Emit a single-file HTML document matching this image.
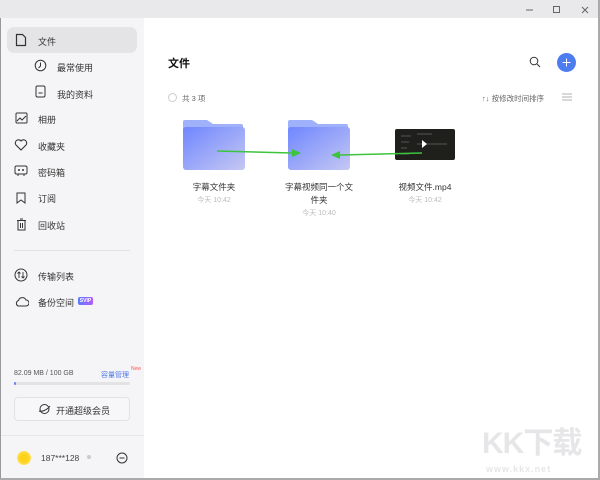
<!DOCTYPE html>
<html><head><meta charset="utf-8">
<style>
*{margin:0;padding:0;box-sizing:border-box}
html,body{width:600px;height:480px;overflow:hidden}
body{background:#fff;font-family:"Liberation Sans","Noto Sans CJK SC",sans-serif;position:relative;color:#222}
.abs{position:absolute;white-space:nowrap}
.tb{left:0;top:0;width:600px;height:18px;background:#e9e9eb}
.side{left:0;top:18px;width:144px;height:462px;background:#f5f5f7;border-left:1px solid #999}
.main{left:144px;top:18px;width:454px;height:462px;background:#fff}
.rb{left:598px;top:0;width:2px;height:480px;background:#aaa}
.bb{left:0;top:478px;width:600px;height:2px;background:#aaa}
.nav{font-size:9px;color:#333;position:absolute;left:38px;white-space:nowrap}
.sub{left:57px}
.ic{position:absolute}
.nm{position:absolute;font-size:8.5px;color:#333;text-align:center;width:90px}
.dt{position:absolute;font-size:7px;color:#bbb;text-align:center;width:90px}
</style></head><body>
<div class="abs tb"></div>
<svg class="abs" style="left:520px;top:4px" width="75" height="12"><line x1="6" y1="6" x2="13" y2="6" stroke="#666"/><rect x="33.5" y="2.5" width="6" height="6" fill="none" stroke="#666"/><path d="M62 3l6 6M68 3l-6 6" stroke="#666"/></svg>
<div class="abs side"></div>
<div class="abs main"></div>
<div class="abs" style="left:7px;top:27px;width:130px;height:26px;background:#e4e4e7;border-radius:7px"></div>
<svg class="ic" style="left:15px;top:33px" width="12" height="14"><path d="M1.5 1.5h6l3 3v8h-9z" fill="none" stroke="#333" stroke-width="1.2"/></svg>
<div class="nav" style="top:35px">文件</div>
<svg class="ic" style="left:34px;top:59px" width="13" height="13"><circle cx="6.5" cy="6.5" r="5.3" fill="none" stroke="#333"/><path d="M6.5 3.5v3.5l-2 2" fill="none" stroke="#333"/></svg>
<div class="nav sub" style="top:61px">最常使用</div>
<svg class="ic" style="left:35px;top:85px" width="11" height="13"><rect x="1" y="1" width="9" height="11" rx="1.5" fill="none" stroke="#333"/><path d="M3.5 8h4" stroke="#333"/></svg>
<div class="nav sub" style="top:88px">我的资料</div>
<svg class="ic" style="left:15px;top:112px" width="13" height="12"><rect x="1" y="1" width="11" height="10" rx="1" fill="none" stroke="#333"/><path d="M2 9l3-3 2 2 4-4" fill="none" stroke="#333"/></svg>
<div class="nav" style="top:113px">相册</div>
<svg class="ic" style="left:14px;top:139px" width="14" height="12"><path d="M7 11L2 6a3 3 0 0 1 5-4 3 3 0 0 1 5 4z" fill="none" stroke="#333" stroke-width="1.1"/></svg>
<div class="nav" style="top:140px">收藏夹</div>
<svg class="ic" style="left:14px;top:165px" width="14" height="12"><rect x="1" y="1" width="12" height="8" rx="1.5" fill="none" stroke="#333"/><circle cx="5" cy="5" r="1" fill="#333"/><circle cx="9" cy="5" r="1" fill="#333"/><path d="M4 9v2M10 9v2" stroke="#333"/></svg>
<div class="nav" style="top:166px">密码箱</div>
<svg class="ic" style="left:16px;top:192px" width="10" height="12"><path d="M1 1h8v10l-4-3-4 3z" fill="none" stroke="#333"/></svg>
<div class="nav" style="top:192px">订阅</div>
<svg class="ic" style="left:16px;top:218px" width="11" height="13"><path d="M1 2.5h9M4 1h3M2 3v9h7V3M4.5 5v5M6.5 5v5" fill="none" stroke="#333"/></svg>
<div class="nav" style="top:219px">回收站</div>
<div class="abs" style="left:14px;top:250px;width:116px;height:1px;background:#e2e2e5"></div>
<svg class="ic" style="left:14px;top:268px" width="14" height="14"><circle cx="7" cy="7" r="6" fill="none" stroke="#333"/><path d="M5 4v6M3.5 5.5L5 4l1.5 1.5M9 4v6M7.5 8.5L9 10l1.5-1.5" fill="none" stroke="#333" stroke-width=".9"/></svg>
<div class="nav" style="top:270px">传输列表</div>
<svg class="ic" style="left:14px;top:296px" width="15" height="11"><path d="M4 10h8a3 3 0 0 0 0-6 4 4 0 0 0-7.5 0.5A3 3 0 0 0 4 10z" fill="none" stroke="#333"/></svg>
<div class="nav" style="top:296px">备份空间</div>
<div class="abs" style="left:78px;top:297px;width:15px;height:8px;border-radius:2px;background:linear-gradient(90deg,#5b7bff,#b45cff);color:#fff;font-size:5px;line-height:8px;text-align:center;font-weight:bold">SVIP</div>
<div class="abs" style="left:14px;top:370px;font-size:7px;color:#555">82.09 MB / 100 GB</div>
<div class="abs" style="left:101px;top:370px;font-size:7px;color:#4f78e8">容量管理</div>
<div class="abs" style="left:131px;top:366px;font-size:5px;color:#f55">New</div>
<div class="abs" style="left:14px;top:382px;width:116px;height:3px;background:#e3e3e6;border-radius:2px"></div>
<div class="abs" style="left:14px;top:382px;width:2px;height:3px;background:#6f7dff;border-radius:2px"></div>
<div class="abs" style="left:14px;top:397px;width:116px;height:24px;border:1px solid #e2e2e5;border-radius:4px;background:#f7f7f9"></div>
<svg class="ic" style="left:38px;top:403px" width="13" height="12"><circle cx="6.5" cy="6" r="4.5" fill="none" stroke="#333"/><path d="M1 8c3 1 8-1 11-5" fill="none" stroke="#333"/></svg>
<div class="abs" style="left:56px;top:404px;font-size:9px;color:#333">开通超级会员</div>
<div class="abs" style="left:1px;top:435px;width:143px;height:1px;background:#e6e6e9"></div>
<div class="abs" style="left:17px;top:451px;width:14px;height:14px;border-radius:50%;background:radial-gradient(#ffd21a 40%,#fff0a0 100%)"></div>
<div class="abs" style="left:41px;top:453px;font-size:8.5px;color:#444">187***128</div>
<div class="abs" style="left:87px;top:455px;width:4px;height:4px;border-radius:50%;background:#ccc"></div>
<svg class="ic" style="left:116px;top:452px" width="12" height="12"><circle cx="6" cy="6" r="5" fill="none" stroke="#333"/><path d="M3.5 6h5" stroke="#333"/></svg>

<div class="abs" style="left:168px;top:55px;font-size:11px;font-weight:bold;color:#111">文件</div>
<svg class="ic" style="left:529px;top:56px" width="13" height="13"><circle cx="5" cy="5" r="3.8" fill="none" stroke="#333"/><path d="M8 8l3 3" stroke="#333"/></svg>
<div class="abs" style="left:557px;top:53px;width:19px;height:19px;border-radius:50%;background:#4d7cf0"></div>
<svg class="ic" style="left:561px;top:57px" width="11" height="11"><path d="M5.5 1.5v8M1.5 5.5h8" stroke="#fff" stroke-width="1"/></svg>
<div class="abs" style="left:168px;top:93px;width:9px;height:9px;border-radius:50%;border:1px solid #ccc"></div>
<div class="abs" style="left:182px;top:93px;font-size:7.5px;color:#666">共 3 项</div>
<div class="abs" style="left:482px;top:93px;font-size:7.5px;color:#666">↑↓ 按修改时间排序</div>
<svg class="ic" style="left:562px;top:93px" width="10" height="8"><path d="M0 1h10M0 4h10M0 7h10" stroke="#999" stroke-width=".8"/></svg>

<svg class="ic" style="left:180px;top:118px" width="300" height="55">
<defs><linearGradient id="g" x1="0" y1="0" x2="1" y2="1"><stop offset="0" stop-color="#6f86ff"/><stop offset="1" stop-color="#c5c8f2"/></linearGradient></defs>
<g><path d="M3 4a2 2 0 0 1 2-2h22l6 4h28a2 2 0 0 1 2 2v4H3z" fill="#9fb1fb"/><rect x="3" y="9" width="62" height="43" rx="3" fill="url(#g)"/></g>
<g transform="translate(105,0)"><path d="M3 4a2 2 0 0 1 2-2h22l6 4h28a2 2 0 0 1 2 2v4H3z" fill="#9fb1fb"/><rect x="3" y="9" width="62" height="43" rx="3" fill="url(#g)"/></g>
<rect x="215" y="11" width="60" height="31" rx="2" fill="#1f1f1c"/>
<path d="M221 18h10M237 16h15M221 24h8M237 26h30M221 30h6M221 36h8" stroke="#555" stroke-width="1"/>
<path d="M242 22l5 4-5 4z" fill="#fff"/>
<line x1="37" y1="33" x2="112" y2="35" stroke="#3cc43c" stroke-width="1.5"/>
<path d="M121 35l-9-4v8z" fill="#3cc43c"/>
<line x1="242" y1="35" x2="160" y2="37" stroke="#3cc43c" stroke-width="1.5"/>
<path d="M151 37l9-4v8z" fill="#3cc43c"/>
</svg>
<div class="nm" style="left:169px;top:181px">字幕文件夹</div>
<div class="dt" style="left:169px;top:195px">今天 10:42</div>
<div class="nm" style="left:274px;top:181px;line-height:13px">字幕视频同一个文<br>件夹</div>
<div class="dt" style="left:274px;top:208px">今天 10:40</div>
<div class="nm" style="left:380px;top:181px">视频文件.mp4</div>
<div class="dt" style="left:380px;top:195px">今天 10:42</div>

<div class="abs" style="left:482px;top:428px;font-size:30px;line-height:32px;font-weight:bold;color:#e6e6e8;letter-spacing:-1px">KK下载</div>
<div class="abs" style="left:486px;top:464px;font-size:9px;line-height:10px;font-weight:bold;color:#e6e6e8;letter-spacing:1px">www.kkx.net</div>
<div class="abs rb"></div>
<div class="abs bb"></div>
</body></html>
